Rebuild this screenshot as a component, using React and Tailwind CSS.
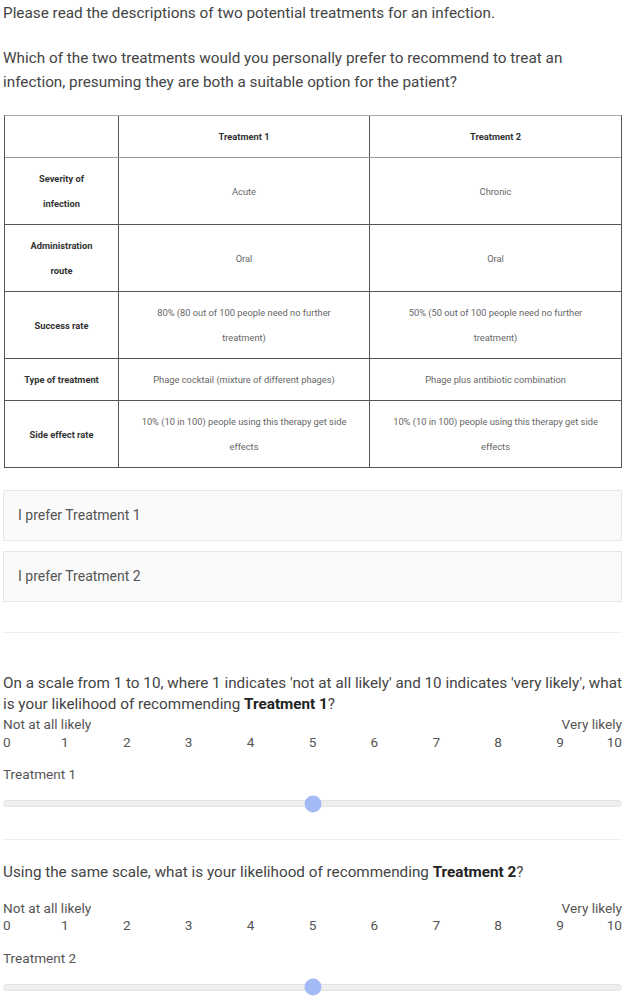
import React from "react";

const rows = [
    {label: ["Severity of", "infection"], t1: ["Acute"], t2: ["Chronic"]},
    {label: ["Administration", "route"], t1: ["Oral"], t2: ["Oral"]},
    {
        label: ["Success rate"],
        t1: ["80% (80 out of 100 people need no further", "treatment)"],
        t2: ["50% (50 out of 100 people need no further", "treatment)"],
    },
    {
        label: ["Type of treatment"],
        t1: ["Phage cocktail (mixture of different phages)"],
        t2: ["Phage plus antibiotic combination"],
    },
    {
        label: ["Side effect rate"],
        t1: ["10% (10 in 100) people using this therapy get side", "effects"],
        t2: ["10% (10 in 100) people using this therapy get side", "effects"],
    },
];

function Cell({lines, bold, last}) {
    return (
        <div
            className={`flex flex-col justify-center items-center text-center px-1 py-[8px] leading-[25px] text-[9.3px] ${
                bold ? "font-bold text-[#333]" : "text-[#666]"
            } ${last ? "" : "border-r border-[#555]"}`}
        >
            {lines.map((l, i) => (
                <div key={i} className="whitespace-nowrap">{l}</div>
            ))}
        </div>
    );
}

function TreatmentTable() {
    return (
        <div className="mt-[21px] ml-[1px] border border-[#555] border-t-[#aaa]">
            <div className="grid grid-cols-[114px_251px_1fr] border-b border-[#999]">
                <Cell lines={[""]} />
                <Cell lines={["Treatment 1"]} bold />
                <Cell lines={["Treatment 2"]} bold last />
            </div>
            {rows.map((r, i) => (
                <div
                    key={i}
                    className={`grid grid-cols-[114px_251px_1fr] ${i < rows.length - 1 ? "border-b border-[#555]" : ""}`}
                >
                    <Cell lines={r.label} bold />
                    <Cell lines={r.t1} />
                    <Cell lines={r.t2} last />
                </div>
            ))}
        </div>
    );
}

function Choice({text, className}) {
    return (
        <div className={`h-[51px] flex items-center pl-[14px] bg-[#fafafa] border border-[#e6e6e6] text-[14px] text-[#555] ${className}`}>
            {text}
        </div>
    );
}

function Scale({gap}) {
    const nums = [0, 1, 2, 3, 4, 5, 6, 7, 8, 9];
    return (
        <div className="text-[13.6px] leading-[17px] text-[#555]">
            <div className="flex justify-between">
                <span>Not at all likely</span>
                <span>Very likely</span>
            </div>
            <div className={`grid grid-cols-10 ${gap}`}>
                {nums.map((n) => (
                    <div key={n} className="flex justify-between">
                        <span className={n === 0 ? "" : "inline-block -translate-x-1/2"}>{n}</span>
                        {n === 9 && <span>10</span>}
                    </div>
                ))}
            </div>
        </div>
    );
}

function Slider({label, gap}) {
    return (
        <div>
            <div className={`${gap} text-[13.6px] leading-[17px] text-[#555]`}>{label}</div>
            <div className="relative mt-[10.5px] h-[20px] flex items-center">
                <div className="w-full h-[7px] rounded-full bg-[#eeeeee] border border-[#e3e3e3]" />
                {/* thumb sits over the track at the midpoint */}
                <div className="absolute left-1/2 top-1/2 -translate-x-1/2 -translate-y-1/2 w-[17px] h-[17px] rounded-full bg-[#a3baf4]" />
            </div>
        </div>
    );
}

export default function App() {
    return (
        <div className="w-[629px] h-[999px] overflow-hidden bg-white pl-[3px] pr-[7px] font-['Roboto',sans-serif] text-[#444]">
            <p className="mt-[1px] text-[15.3px] leading-[24px]">
                Please read the descriptions of two potential treatments for an infection.
            </p>
            <p className="mt-[21px] text-[15.3px] leading-[24px]">
                Which of the two treatments would you personally prefer to recommend to treat an infection, presuming
                they are both a suitable option for the patient?
            </p>

            <TreatmentTable />

            <Choice text="I prefer Treatment 1" className="mt-[22px]" />
            <Choice text="I prefer Treatment 2" className="mt-[10px]" />

            <div className="mt-[30px] h-px bg-[#eeeeee]" />

            <p className="mt-[40px] text-[15.25px] leading-[21px]">
                On a scale from 1 to 10, where 1 indicates 'not at all likely' and 10 indicates 'very likely', what is
                your likelihood of recommending <b className="text-[#222]">Treatment 1</b>?
            </p>
            <div className="mt-[1px]">
                <Scale gap="mt-[1px]" />
            </div>
            <Slider label="Treatment 1" gap="mt-[15px]" />

            <div className="mt-[25px] h-px bg-[#eeeeee]" />

            <p className="mt-[22px] text-[15.25px] leading-[21px]">
                Using the same scale, what is your likelihood of recommending <b className="text-[#222]">Treatment 2</b>?
            </p>
            <div className="mt-[17px]">
                <Scale gap="mt-0" />
            </div>
            <Slider label="Treatment 2" gap="mt-[16px]" />
        </div>
    );
}
